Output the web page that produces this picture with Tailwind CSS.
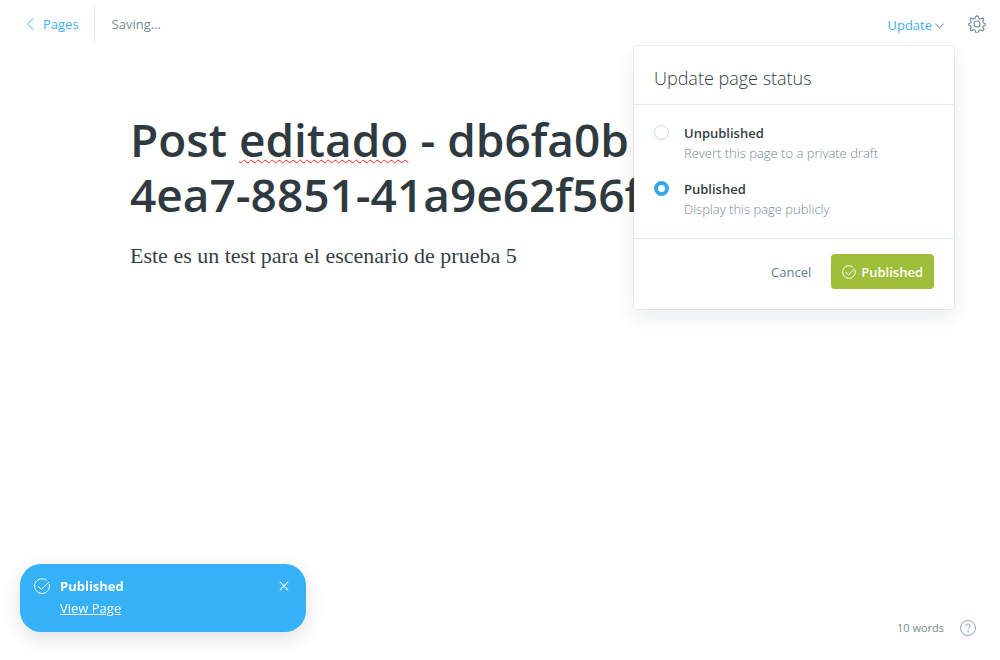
<!DOCTYPE html>
<html lang="en">
<head>
<meta charset="utf-8">
<meta name="viewport" content="width=device-width, initial-scale=1">
<title>Page editor</title>
<script src="https://cdn.jsdelivr.net/npm/@tailwindcss/browser@4"></script>
</head>
<body class="relative flex min-h-screen flex-col bg-white font-['Open_Sans','Noto_Sans',sans-serif] text-[13px] leading-5 text-[#738a94]">

<header class="flex h-12 items-center justify-between pr-3.5 pl-6">
  <div class="flex items-center">
    <a href="#pages" class="flex items-center gap-[7px] pr-[15px] text-[#3eb0ef]">
      <svg class="h-3 w-3" viewBox="0 0 12 12" fill="none" stroke="currentColor" stroke-linecap="round" stroke-linejoin="round" aria-hidden="true"><path d="M9 .7 3.500 6 9 11.300"/></svg>
      Pages
    </a>
    <span class="flex h-9 items-center border-l border-[#dfe9ee] pl-[17px]">Saving...</span>
  </div>

  <div class="relative flex items-center gap-6">
    <button type="button" class="flex items-center gap-[3px] pt-0.5 text-[#3eb0ef]" aria-expanded="true">
      Update
      <svg class="h-[9px] w-[9px] text-[#738a94]" viewBox="0 0 9 9" fill="none" stroke="currentColor" stroke-linecap="round" stroke-linejoin="round" aria-hidden="true"><path d="M.5 3l4 3.800 4-3.800"/></svg>
    </button>
    <button type="button" aria-label="Settings" class="text-[#738a94]">
      <svg class="h-[18px] w-[18px]" viewBox="0 0 24 24" fill="none" stroke="currentColor" stroke-width="1.500" stroke-linejoin="round" aria-hidden="true"><circle cx="12" cy="12" r="4"/><path d="M13.700 2.300l.5 1.600a2.100 2.100 0 0 0 3 1.250l1.500-.8a1.700 1.700 0 0 1 2.200 2.200l-.8 1.500a2.100 2.100 0 0 0 1.250 3l1.100.35a1.300 1.300 0 0 1 0 2.400l-1.100.35a2.100 2.100 0 0 0-1.250 3l.8 1.500a1.700 1.700 0 0 1-2.200 2.200l-1.500-.8a2.100 2.100 0 0 0-3 1.250l-.5 1.600a1.800 1.800 0 0 1-3.400 0l-.5-1.600a2.100 2.100 0 0 0-3-1.250l-1.500.8a1.700 1.700 0 0 1-2.200-2.200l.8-1.500a2.100 2.100 0 0 0-1.250-3l-1.100-.35a1.300 1.300 0 0 1 0-2.400l1.100-.35a2.100 2.100 0 0 0 1.250-3l-.8-1.500a1.700 1.700 0 0 1 2.200-2.200l1.500.8a2.100 2.100 0 0 0 3-1.250l.5-1.600a1.800 1.800 0 0 1 3.400 0z"/></svg>
    </button>

    <form class="absolute top-full right-8 z-10 mt-[11px] w-80 rounded bg-white shadow-[0_0_0_1px_rgba(99,114,130,0.1),0_8px_20px_rgba(27,39,51,0.09)]">
      <h2 class="border-b border-[#e3edf5] px-5 pt-5 pb-3.5 text-lg leading-6 font-light text-[#343f44]">Update page status</h2>
      <fieldset class="flex flex-col gap-4 border-b border-[#e3edf5] px-5 pt-[18px] pb-[19px]">
        <label class="flex items-start gap-[15px]">
          <input type="radio" name="status" value="draft" class="mt-0.5 h-[15px] w-[15px] shrink-0 appearance-none rounded-full border border-[#c5d9e8] bg-white checked:border-4 checked:border-[#35a6e8]">
          <span><span class="block font-semibold text-[#343f44]">Unpublished</span><span class="block font-light text-[#738a94]">Revert this page to a private draft</span></span>
        </label>
        <label class="flex items-start gap-[15px]">
          <input type="radio" name="status" value="published" checked class="mt-0.5 h-[15px] w-[15px] shrink-0 appearance-none rounded-full border border-[#c5d9e8] bg-white checked:border-4 checked:border-[#35a6e8]">
          <span><span class="block font-semibold text-[#343f44]">Published</span><span class="block font-light text-[#738a94]">Display this page publicly</span></span>
        </label>
      </fieldset>
      <div class="flex items-center justify-end gap-5 px-5 pt-[15px] pb-5">
        <button type="button" class="text-[#667d87]">Cancel</button>
        <button type="button" class="flex h-[35px] items-center gap-[5px] rounded bg-[#9fbf3b] px-[11px] font-semibold text-white">
          <svg class="h-3.5 w-3.5" viewBox="0 0 24 24" fill="none" stroke="currentColor" stroke-width="1.700" stroke-linecap="round" stroke-linejoin="round" aria-hidden="true"><path d="M22.700 9.500A11 11 0 1 1 18.500 3.100M6.500 12.500l4.500 4.500L22 6.500"/></svg>
          Published
        </button>
      </div>
    </form>
  </div>
</header>

<main class="mx-auto w-full max-w-[740px] flex-1 pt-16">
  <h1 contenteditable="true" spellcheck="false" class="text-[46px] leading-[55px] font-semibold text-[#2e3a40]">Post <span class="underline decoration-[#ff1f1f] decoration-wavy decoration-1 underline-offset-2">editado</span> - db6fa0b<br>4ea7-8851-41a9e62f56f</h1>
  <p contenteditable="true" spellcheck="false" class="mt-[18px] font-['Liberation_Serif',serif] text-[22px] leading-8 text-[#343f44]">Este es un test para el escenario de prueba 5</p>
</main>

<aside role="status" class="fixed bottom-7 left-5 flex w-[286px] items-start rounded-[21px] bg-[#35b1f8] px-3.5 pt-[11px] pb-[13px] text-white shadow-[0_6px_20px_rgba(0,0,0,0.12)]">
  <svg class="mt-[3px] mr-2.5 h-4 w-4 shrink-0" viewBox="0 0 24 24" fill="none" stroke="currentColor" stroke-width="1.400" stroke-linecap="round" stroke-linejoin="round" aria-hidden="true"><path d="M22.900 9.500A11.200 11.200 0 1 1 18.500 3M6.500 12.500l4.500 4.500L22 6.500"/></svg>
  <div class="flex-1 leading-[22px]">
    <strong class="block font-bold">Published</strong>
    <a href="#view" class="underline">View Page</a>
  </div>
  <button type="button" aria-label="Close" class="mt-1.5 mr-[3px]">
    <svg class="h-2.5 w-2.5" viewBox="0 0 10 10" fill="none" stroke="currentColor" stroke-width="1.200" stroke-linecap="round" aria-hidden="true"><path d="m1.200 1.200 7.600 7.600M8.800 1.200 1.200 8.800"/></svg>
  </button>
</aside>

<footer class="flex items-center justify-end gap-4 pr-6 pb-[23px] text-[11px] leading-[18px]">
  <span>10 words</span>
  <button type="button" aria-label="Help" class="text-[#8fa3ad]">
    <svg class="h-4 w-4" viewBox="0 0 16 16" fill="none" stroke="currentColor" stroke-linecap="round" aria-hidden="true"><circle cx="8" cy="8" r="7.500"/><path d="M5.800 6.100c0-1.300 1-2.100 2.200-2.100s2.200.8 2.200 2c0 1.500-2.200 1.700-2.200 3.300"/><circle cx="8" cy="11.800" r=".25"/></svg>
  </button>
</footer>
</body>
</html>
